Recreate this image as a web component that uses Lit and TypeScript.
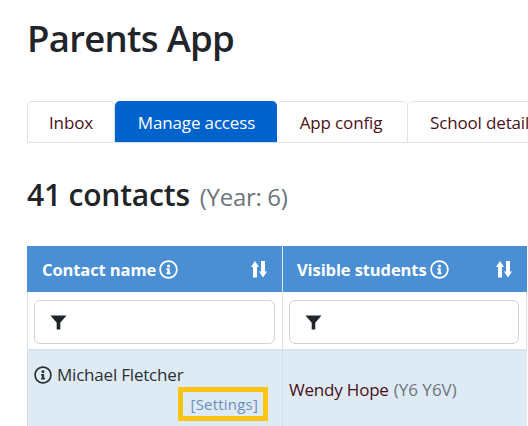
import { LitElement, html, css, svg } from "lit";
import { customElement } from "lit/decorators.js";

const infoIcon = (size: number) => html`<svg class="info" width=${size} height=${size} viewBox="0 0 512 512" fill="currentColor"><path d="M256 8C119 8 8 119 8 256s111 248 248 248 248-111 248-248S393 8 256 8zm0 448c-110.500 0-200-89.500-200-200S145.500 56 256 56s200 89.500 200 200-89.500 200-200 200zm0-338a42 42 0 1 1 0 84 42 42 0 0 1 0-84zm56 254c0 7-5 12-12 12h-88c-7 0-12-5-12-12v-24c0-7 5-12 12-12h12v-64h-12c-7 0-12-5-12-12v-24c0-7 5-12 12-12h64c7 0 12 5 12 12v100h12c7 0 12 5 12 12z"/></svg>`;

const sortIcon = html`<svg class="sort" width="16" height="17" viewBox="0 0 16 17" fill="currentColor">${svg`<path d="M4 0 0 6H2V16.500H6V6H8Z"/><path d="M12 16.500 16 10.500H14V0H10V10.500H8Z"/>`}</svg>`;

const filterIcon = html`<svg class="filter" width="17" height="15" viewBox="0 0 17 15">${svg`<path fill="#212529" d="M0.500 0.500H16.500L10.300 7.700V14.500H6.700V7.700Z"/>`}</svg>`;

@customElement("app-root")
export class AppRoot extends LitElement {
  static styles = css`
    :host {
      display: block;
      width: 528px;
      height: 426px;
      overflow: hidden;
      background: #fff;
      font-family: "Open Sans", "Noto Sans", sans-serif;
      color: #212529;
      box-sizing: border-box;
      padding: 14px 0 0 27px;
    }
    h1 {
      margin: 0;
      font-size: 36.500px;
      line-height: 48px;
      font-weight: 600;
      letter-spacing: -0.7px;
    }
    .tabs {
      display: flex;
      margin-top: 39px;
      height: 41px;
      width: 520px;
      border-bottom: 1px solid #dee2e6;
      box-sizing: content-box;
    }
    .tab {
      flex: none;
      box-sizing: border-box;
      height: 41px;
      display: flex;
      align-items: center;
      justify-content: center;
      font-size: 17px;
      letter-spacing: -0.15px;
      color: #4a1018;
      border: 1px solid #dee2e6;
      border-bottom: none;
      border-left: none;
      border-radius: 5px 5px 0 0;
      white-space: nowrap;
    }
    .tab.first { border-left: 1px solid #dee2e6; width: 88px; }
    .tab.active {
      width: 162px;
      padding-left: 2px;
      background: #0062cc;
      border-color: #0062cc;
      color: #fff;
    }
    .tab.config { width: 131px; padding-right: 2px; }
    .tab.school { width: 160px; justify-content: flex-start; padding-left: 22px; }
    h2 {
      margin: 0;
      margin-top: 33px;
      font-size: 30px;
      line-height: 38px;
      font-weight: 600;
      display: flex;
      align-items: baseline;
      gap: 10px;
      letter-spacing: -0.2px;
    }
    h2 small {
      font-size: 24px;
      font-weight: 400;
      color: #6c757d;
      letter-spacing: -0.3px;
    }
    .table {
      margin-top: 30px;
      width: 500px;
      display: grid;
      grid-template-columns: 255px 245px;
      grid-template-rows: 46px 59px 76px;
    }
    .head {
      background: #4a8ed4;
      color: #fff;
      font-weight: 700;
      font-size: 16.500px;
      letter-spacing: -0.1px;
      display: flex;
      align-items: center;
      gap: 3px;
      padding: 0 15px;
      box-sizing: border-box;
    }
    .head + .head { border-left: 1px solid #dbe7f3; padding-left: 14px; }
    .head .label { white-space: nowrap; }
    .head .sort { margin-left: auto; }
    .fcell {
      box-sizing: border-box;
      padding: 8px 7px 5px 6px;
      border-left: 1px solid #dee2e6;
      border-bottom: 2px solid #dee2e6;
    }
    .fcell.last { border-right: 1px solid #dee2e6; padding-right: 7px; }
    .box {
      height: 100%;
      box-sizing: border-box;
      background: #fff;
      border: 1px solid #ced4da;
      border-radius: 6px;
      display: flex;
      align-items: center;
      padding-left: 15px;
    }
    .cell {
      box-sizing: border-box;
      background: #deeaf4;
      border-left: 1px solid #d3dfe9;
      font-size: 17px;
      letter-spacing: -0.2px;
    }
    .cell.name {
      padding: 12px 7px 0 6px;
      display: flex;
      flex-direction: column;
    }
    .person { display: flex; align-items: center; gap: 5px; line-height: 24px; white-space: nowrap; color: #2b3035; }
    .settings {
      align-self: flex-end;
      margin: 0 7px 0 0;
      border: 5px solid #fdc513;
      padding: 0 5px 0 8px;
      font-size: 15px;
      line-height: 24px;
      letter-spacing: 0.2px;
      color: #6c8ebf;
    }
    .cell.student {
      display: flex;
      align-items: center;
      padding: 0 0 0 6px;
      color: #4a1018;
      white-space: nowrap;
      gap: 5px;
    }
    .cell.student span { color: #6c757d; letter-spacing: 0; }
  `;

  render() {
    return html`
      <h1>Parents App</h1>
      <nav class="tabs">
        <div class="tab first">Inbox</div>
        <div class="tab active">Manage access</div>
        <div class="tab config">App config</div>
        <div class="tab school">School details</div>
      </nav>
      <h2>41 contacts <small>(Year: 6)</small></h2>
      <div class="table">
        <div class="head"><span class="label">Contact name</span>${infoIcon(19)}${sortIcon}</div>
        <div class="head"><span class="label">Visible students</span>${infoIcon(19)}${sortIcon}</div>
        <div class="fcell"><div class="box">${filterIcon}</div></div>
        <div class="fcell last"><div class="box">${filterIcon}</div></div>
        <div class="cell name">
          <div class="person">${infoIcon(18)}<span>Michael Fletcher</span></div>
          <div class="settings">[Settings]</div>
        </div>
        <div class="cell student">Wendy Hope <span>(Y6 Y6V)</span></div>
      </div>
    `;
  }
}
